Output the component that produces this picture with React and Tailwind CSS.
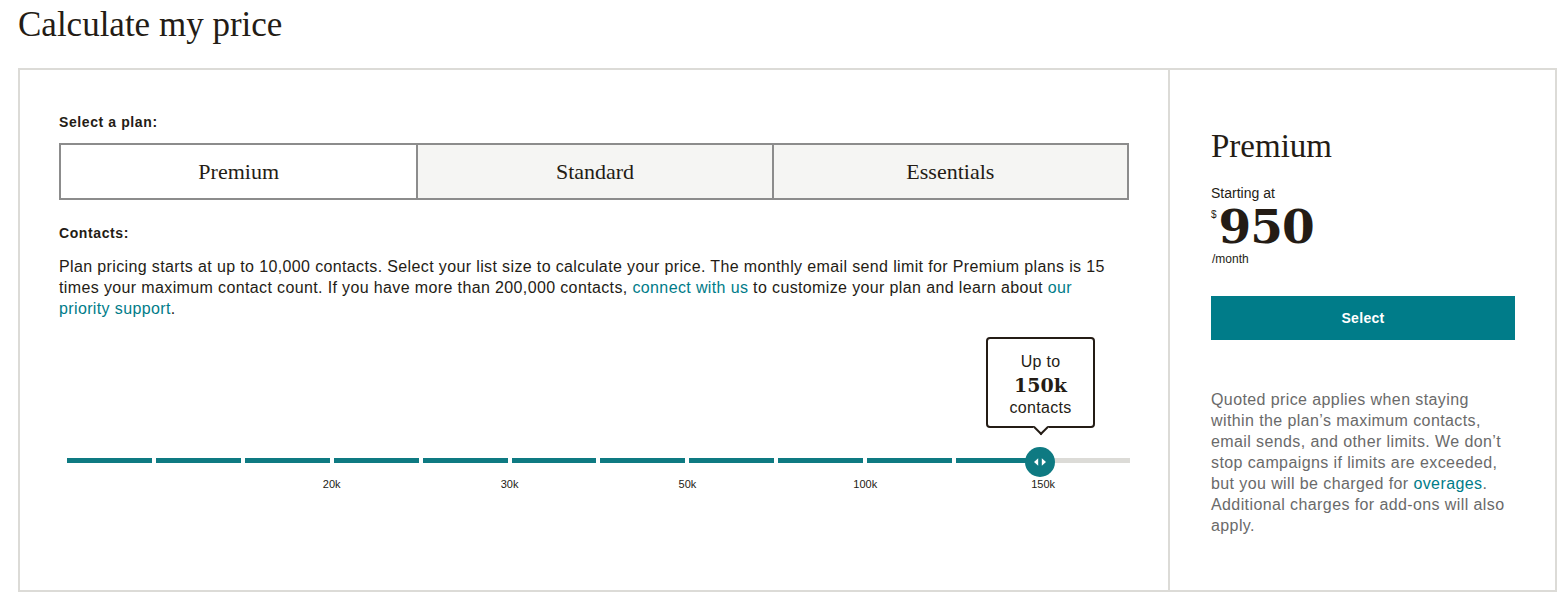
import React, { useState } from 'react';

const PLANS = ['Premium', 'Standard', 'Essentials'];

// slider ticks: 12 equal parts, labels sit on every other boundary
const SEGMENTS = 12;
const FILLED = 11;
const LABELS = [
    { text: '20k', col: 'col-start-3' },
    { text: '30k', col: 'col-start-5' },
    { text: '50k', col: 'col-start-7' },
    { text: '100k', col: 'col-start-9' },
    { text: '150k', col: 'col-start-11' },
];

const sans = "font-['Liberation_Sans',Arial,sans-serif]";
const serif = "font-['Liberation_Serif','Times_New_Roman',serif]";
const serifBold = "font-['DejaVu_Serif',Georgia,serif]";

const ThumbIcon = () => (
    <svg width="30" height="30" viewBox="0 0 30 30" aria-hidden="true">
        <path d="M13.2 11.2 L13.2 18.8 L9 15 Z" fill="#fff" />
        <path d="M16.8 11.2 L16.8 18.8 L21 15 Z" fill="#fff" />
    </svg>
);

const App = () => {
    const [plan, setPlan] = useState('Premium');

    return (
        <div className={`w-[1562px] min-h-[600px] bg-white text-[#241c15] ${sans}`}>
            <h1 className={`pt-1 pl-[18px] text-[35px] leading-[42px] ${serif}`}>
                Calculate my price
            </h1>

            <div className="mt-[22px] ml-[18px] w-[1539px] border-2 border-[#dcdbd7] flex">
                {/* left: plan + contacts */}
                <div className="w-[1150px] border-r-2 border-[#dcdbd7] pl-[39px] pr-[39px] pt-[42px]">
                    <p className="text-[14px] leading-[20px] font-bold tracking-[0.6px]">Select a plan:</p>

                    <div className="mt-[11px] grid grid-cols-3 h-[57px] border-2 border-[#8c8c8c]">
                        {PLANS.map((p, i) => (
                            <button
                                key={p}
                                type="button"
                                onClick={() => setPlan(p)}
                                className={`${serif} text-[22px] text-[#241c15] ${i > 0 ? 'border-l-2 border-[#8c8c8c]' : ''} ${plan === p ? 'bg-white' : 'bg-[#f5f5f3]'}`}
                            >
                                {p}
                            </button>
                        ))}
                    </div>

                    <p className="mt-[23px] text-[14px] leading-[20px] font-bold tracking-[0.6px]">Contacts:</p>
                    <p className="mt-[13px] text-[16px] leading-[21px] tracking-[0.37px]">
                        Plan pricing starts at up to 10,000 contacts. Select your list size to calculate your price. The monthly email send limit for Premium plans is 15
                        <br />
                        times your maximum contact count. If you have more than 200,000 contacts,{' '}
                        <a href="#" className="text-[#007c89]">connect with us</a> to customize your plan and learn about{' '}
                        <a href="#" className="text-[#007c89]">our</a>
                        <br />
                        <a href="#" className="text-[#007c89]">priority support</a>.
                    </p>

                    <div className="relative mt-[139px] ml-[8px] mr-[-1px]">
                        <div className="grid grid-cols-12 gap-x-[4px] h-[5px]">
                            {Array.from({ length: SEGMENTS }).map((_, i) => (
                                <div
                                    key={i}
                                    className={i < FILLED ? 'bg-[#0e7a82]' : 'bg-[#dcdbd7] -ml-[4px]'}
                                />
                            ))}
                        </div>

                        {/* tooltip */}
                        <div className="absolute left-[919px] -top-[121px] w-[109px] h-[91px] bg-white border-2 border-[#241c15] rounded-[4px] flex flex-col items-center pt-[12px]">
                            <span className="text-[16px] leading-[22px] tracking-[0.3px]">Up to</span>
                            <span className={`${serifBold} font-bold text-[19px] leading-[24px]`}>150k</span>
                            <span className="text-[16px] leading-[22px] tracking-[0.3px]">contacts</span>
                            <span className="absolute left-1/2 -bottom-[7px] -translate-x-1/2 w-[11px] h-[11px] rotate-45 bg-white border-r-2 border-b-2 border-[#241c15]" />
                        </div>

                        {/* thumb */}
                        <div className="absolute left-[958px] -top-[11px] w-[30px] h-[30px] rounded-full bg-[#0e7a82]">
                            <ThumbIcon />
                        </div>

                        <div className="mt-[13px] grid grid-cols-12 gap-x-[4px] pb-[97px]">
                            {LABELS.map(l => (
                                <span key={l.text} className={`${l.col} col-span-2 text-center text-[11px] leading-[16px] text-[#241c15]`}>
                                    {l.text}
                                </span>
                            ))}
                        </div>
                    </div>
                </div>

                {/* right: summary */}
                <div className="flex-1 pl-[41px] pr-[40px] pt-[56px] pb-[54px]">
                    <h2 className={`${serif} text-[33px] leading-[40px]`}>{plan}</h2>
                    <p className="mt-[18px] text-[14px] leading-[18px]">Starting at</p>
                    <div className="mt-[5px] flex items-start">
                        <span className="text-[10px] leading-[10px] mt-[3px]">$</span>
                        <span className={`${serifBold} font-bold text-[47px] leading-[40px] tracking-[-1px] ml-[2px]`}>950</span>
                    </div>
                    <p className="mt-[4px] ml-[1px] text-[12px] leading-[16px]">/month</p>

                    <button
                        type="button"
                        className="mt-[29px] w-[304px] h-[44px] bg-[#007c89] text-white text-[14px] font-bold tracking-[0.3px]"
                    >
                        Select
                    </button>

                    <p className="mt-[49px] text-[16px] leading-[21px] text-[#6a6a6a] tracking-[0.4px]">
                        Quoted price applies when staying<br />
                        within the plan’s maximum contacts,<br />
                        email sends, and other limits. We don’t<br />
                        stop campaigns if limits are exceeded,<br />
                        but you will be charged for <a href="#" className="text-[#007c89]">overages</a>.<br />
                        Additional charges for add-ons will also<br />
                        apply.
                    </p>
                </div>
            </div>
        </div>
    );
};

export default App;
